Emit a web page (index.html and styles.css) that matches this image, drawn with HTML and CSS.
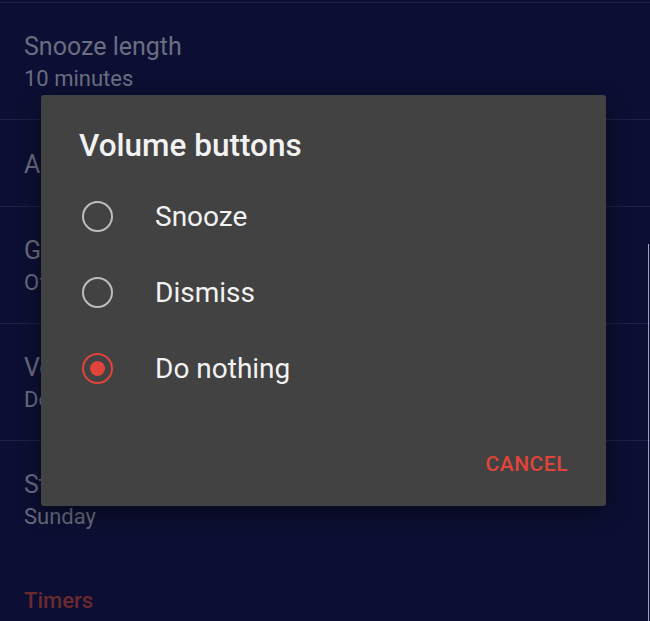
FILE: index.html
```html
<!DOCTYPE html>
<html lang="en">
<head>
    <meta charset="UTF-8">
    <meta name="viewport" content="width=device-width, initial-scale=1.0">
    <title>Settings - Volume buttons</title>
    <link rel="stylesheet" href="styles.css">
</head>
<body>
    <div class="screen">
        <div class="settings">
            <div class="pref">
                <div class="pref-title">Snooze length</div>
                <div class="pref-summary">10 minutes</div>
            </div>
            <div class="pref single">
                <div class="pref-title">Alarm volume</div>
            </div>
            <div class="pref">
                <div class="pref-title">Gradually increase volume</div>
                <div class="pref-summary">Off</div>
            </div>
            <div class="pref">
                <div class="pref-title">Volume buttons</div>
                <div class="pref-summary">Do nothing</div>
            </div>
            <div class="pref last">
                <div class="pref-title">Start week on</div>
                <div class="pref-summary">Sunday</div>
            </div>
            <div class="category">Timers</div>
        </div>

        <div class="dialog">
            <h1 class="dialog-title">Volume buttons</h1>
            <div class="choices">
                <div class="choice">
                    <span class="radio"></span>
                    <span class="choice-label">Snooze</span>
                </div>
                <div class="choice">
                    <span class="radio"></span>
                    <span class="choice-label">Dismiss</span>
                </div>
                <div class="choice">
                    <span class="radio checked"></span>
                    <span class="choice-label">Do nothing</span>
                </div>
            </div>
            <div class="dialog-actions">
                <button class="btn-text">Cancel</button>
            </div>
        </div>

        <div class="edge-line"></div>
    </div>
</body>
</html>
```

FILE: styles.css
```css
:root {
    --bg: #0c0f33;
    --divider: #1d2048;
    --dim-text: #6b6d80;
    --dim-red: #6b2a2e;
    --dialog: #424242;
    --white: #f2f2f2;
    --radio-off: #bdbdbd;
    --accent: #e0443a;
}

* {
    box-sizing: border-box;
}

body {
    margin: 0;
    background-color: var(--bg);
    font-family: Roboto, "Noto Sans", sans-serif;
    overflow: hidden;
}

.screen {
    position: relative;
    width: 650px;
    height: 621px;
    padding-top: 2px;
}

.settings {
    border-top: 1px solid var(--divider);
}

.pref {
    height: 117px;
    padding: 28px 24px 0;
    border-bottom: 1px solid var(--divider);
    white-space: nowrap;
    overflow: hidden;
}

.pref.single {
    height: 87px;
    padding-top: 29px;
}

.pref.last {
    border-bottom: none;
}

.pref-title {
    font-size: 25px;
    line-height: 32px;
    color: var(--dim-text);
}

.pref-summary {
    font-size: 22px;
    line-height: 31px;
    color: var(--dim-text);
}

.category {
    padding: 0 24px;
    margin-top: 28px;
    font-size: 22px;
    line-height: 30px;
    font-weight: 500;
    color: var(--dim-red);
}

/* dialog sits over the list */
.dialog {
    position: absolute;
    left: 41px;
    top: 95px;
    width: 565px;
    height: 411px;
    background: var(--dialog);
    border-radius: 3px;
    box-shadow: 0 8px 24px rgba(0, 0, 0, 0.45);
    padding: 33px 38px 0;
    display: flex;
    flex-direction: column;
}

.dialog-title {
    margin: 0;
    font-size: 31.5px;
    line-height: 36px;
    font-weight: 500;
    color: var(--white);
}

.choices {
    margin-top: 14px;
}

.choice {
    height: 76px;
    display: flex;
    align-items: center;
}

.radio {
    width: 31px;
    height: 31px;
    margin-left: 3px;
    border: 2.5px solid var(--radio-off);
    border-radius: 50%;
    display: flex;
    align-items: center;
    justify-content: center;
    flex-shrink: 0;
}

.radio.checked {
    border-color: var(--accent);
}

.radio.checked::after {
    content: "";
    width: 15px;
    height: 15px;
    border-radius: 50%;
    background: var(--accent);
}

.choice-label {
    margin-left: 42px;
    font-size: 28px;
    color: var(--white);
}

.dialog-actions {
    display: flex;
    justify-content: flex-end;
    padding-top: 44px;
}

.btn-text {
    padding: 0;
    border: none;
    background: none;
    font-family: inherit;
    font-size: 21px;
    line-height: 28px;
    font-weight: 500;
    text-transform: uppercase;
    letter-spacing: 0.5px;
    color: var(--accent);
}

.edge-line {
    position: absolute;
    right: 1px;
    top: 244px;
    bottom: 0;
    width: 1px;
    background: #9ea3c4;
}
```
